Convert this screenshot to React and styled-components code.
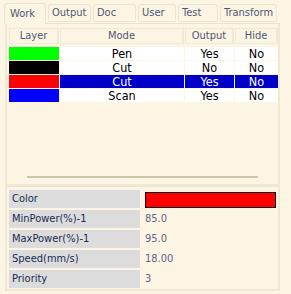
import styled, { createGlobalStyle } from "styled-components";

const Global = createGlobalStyle`
  html, body {
    margin: 0;
    padding: 0;
    background: #fcf5e3;
  }
  * { box-sizing: border-box; }
`;

const Wrapper = styled.div`
  width: 291px;
  height: 294px;
  background: #fcf5e3;
  font-family: "DejaVu Sans Condensed", "DejaVu Sans", sans-serif;
  font-size: 11px;
  color: #4d5877;
  overflow: hidden;
`;

const TabBar = styled.div`
  display: flex;
  align-items: flex-end;
  gap: 2px;
  height: 23px;
  padding-left: 4px;
`;

const Tab = styled.div`
  width: ${(p) => p.w}px;
  height: ${(p) => (p.active ? 21 : 18)}px;
  margin-bottom: ${(p) => (p.active ? -1 : 1)}px;
  border: 1px solid #ece4cf;
  border-bottom: ${(p) => (p.active ? "none" : "1px solid #ece4cf")};
  border-radius: 3px 3px 0 0;
  background: #fcf5e3;
  padding-left: ${(p) => (p.active ? 5 : 3)}px;
  line-height: ${(p) => (p.active ? 19 : 16)}px;
  font-size: 11px;
  white-space: nowrap;
  position: relative;
  z-index: ${(p) => (p.active ? 1 : 0)};
`;

const Panel = styled.div`
  margin: 0 11px 0 5px;
  border: 2px solid #efe8d4;
  border-top: 1px solid #ece4cf;
  height: ${(p) => p.h}px;
  padding: ${(p) => p.pad};
`;

const Grid = styled.div`
  display: grid;
  grid-template-columns: 50px 124px 49px 43px;
  column-gap: 1px;
  row-gap: 1px;
`;

const Head = styled.div`
  height: 16px;
  margin-bottom: 2px;
  border: 1px solid #efe8d4;
  border-right-width: 2px;
  text-align: center;
  line-height: 14px;
  color: #4d5877;
`;

const Swatch = styled.div`
  height: 13px;
  background: ${(p) => p.c};
`;

const Cell = styled.div`
  height: 13px;
  background: ${(p) => (p.sel ? "#0000c8" : "#ffffff")};
  color: ${(p) => (p.sel ? "#ffffff" : "#000000")};
  text-align: center;
  line-height: 13px;
  font-size: 12.5px;
`;

const Scroll = styled.div`
  height: 2px;
  background: #cbc7ad;
  margin: 74px 20px 0 18px;
`;

const Props = styled.div`
  display: flex;
  flex-direction: column;
  gap: 2px;
`;

const PropRow = styled.div`
  display: grid;
  grid-template-columns: 131px 135px;
  column-gap: 3px;
  height: 18px;
`;

const Label = styled.div`
  background: #dcdcdc;
  color: #202a55;
  padding-left: 3px;
  line-height: 18px;
`;

const Value = styled.div`
  padding-left: 2px;
  line-height: 18px;
  color: #5a6688;
`;

const ColorBox = styled.div`
  margin-top: 2px;
  height: 16px;
  width: 131px;
  background: #ff0000;
  border: 1px solid #000;
`;

const tabs = [
  ["Work", 42],
  ["Output", 43],
  ["Doc", 43],
  ["User", 38],
  ["Test", 40],
  ["Transform", 57],
];

const layers = [
  { c: "#00ff00", mode: "Pen", out: "Yes", hide: "No" },
  { c: "#000000", mode: "Cut", out: "No", hide: "No" },
  { c: "#ff0000", mode: "Cut", out: "Yes", hide: "No", sel: true },
  { c: "#0000ff", mode: "Scan", out: "Yes", hide: "No" },
];

const props = [
  ["MinPower(%)-1", "85.0"],
  ["MaxPower(%)-1", "95.0"],
  ["Speed(mm/s)", "18.00"],
  ["Priority", "3"],
];

export default function App() {
  return (
    <Wrapper>
      <Global />
      <TabBar>
        {tabs.map(([t, w], i) => (
          <Tab key={t} w={w} active={i === 0}>
            {t}
          </Tab>
        ))}
      </TabBar>
      <Panel h={163} pad="4px 0 0 2px">
        <Grid>
          <Head>Layer</Head>
          <Head>Mode</Head>
          <Head>Output</Head>
          <Head>Hide</Head>
          {layers.map((l, i) => [
            <Swatch key={"s" + i} c={l.c} />,
            <Cell key={"m" + i} sel={l.sel}>{l.mode}</Cell>,
            <Cell key={"o" + i} sel={l.sel}>{l.out}</Cell>,
            <Cell key={"h" + i} sel={l.sel}>{l.hide}</Cell>,
          ])}
        </Grid>
        <Scroll />
      </Panel>
      <Panel h={105} pad="3px 0 0 2px">
        <Props>
          <PropRow>
            <Label>Color</Label>
            <Value>
              <ColorBox />
            </Value>
          </PropRow>
          {props.map(([k, v]) => (
            <PropRow key={k}>
              <Label>{k}</Label>
              <Value>{v}</Value>
            </PropRow>
          ))}
        </Props>
      </Panel>
    </Wrapper>
  );
}
